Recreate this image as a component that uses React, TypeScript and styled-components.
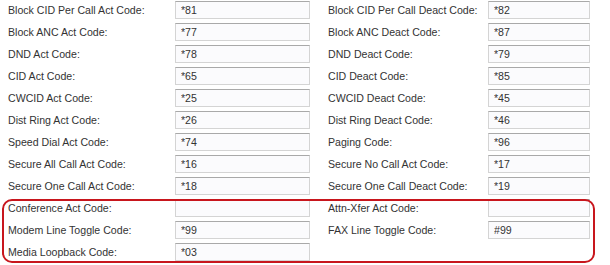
import React from "react";
import styled, { createGlobalStyle } from "styled-components";

const GlobalStyle = createGlobalStyle`
  html, body {
    margin: 0;
    padding: 0;
    background: #fff;
  }
  body {
    font-family: "Liberation Sans", Arial, sans-serif;
    font-size: 10.6px;
    color: #333;
  }
`;

type Field = { label: string; value: string };
type Row = [Field, Field | null];

const rows: Row[] = [
  [{ label: "Block CID Per Call Act Code:", value: "*81" }, { label: "Block CID Per Call Deact Code:", value: "*82" }],
  [{ label: "Block ANC Act Code:", value: "*77" }, { label: "Block ANC Deact Code:", value: "*87" }],
  [{ label: "DND Act Code:", value: "*78" }, { label: "DND Deact Code:", value: "*79" }],
  [{ label: "CID Act Code:", value: "*65" }, { label: "CID Deact Code:", value: "*85" }],
  [{ label: "CWCID Act Code:", value: "*25" }, { label: "CWCID Deact Code:", value: "*45" }],
  [{ label: "Dist Ring Act Code:", value: "*26" }, { label: "Dist Ring Deact Code:", value: "*46" }],
  [{ label: "Speed Dial Act Code:", value: "*74" }, { label: "Paging Code:", value: "*96" }],
  [{ label: "Secure All Call Act Code:", value: "*16" }, { label: "Secure No Call Act Code:", value: "*17" }],
  [{ label: "Secure One Call Act Code:", value: "*18" }, { label: "Secure One Call Deact Code:", value: "*19" }],
  [{ label: "Conference Act Code:", value: "" }, { label: "Attn-Xfer Act Code:", value: "" }],
  [{ label: "Modem Line Toggle Code:", value: "*99" }, { label: "FAX Line Toggle Code:", value: "#99" }],
  [{ label: "Media Loopback Code:", value: "*03" }, null],
];

const Page = styled.div`
  position: relative;
  width: 610px;
  height: 265px;
  overflow: hidden;
`;

const Form = styled.div`
  display: grid;
  grid-template-columns: 167px 135px 178px 102px;
  grid-auto-rows: 22px;
  padding: 0 0 0 8px;
  margin-top: -1px;
`;

const Label = styled.div<{ $right?: boolean }>`
  display: flex;
  align-items: center;
  padding-left: ${({ $right }) => ($right ? "18px" : "0")};
  white-space: nowrap;
`;

const Cell = styled.div`
  display: flex;
  align-items: center;
`;

const Input = styled.input`
  box-sizing: border-box;
  width: 100%;
  height: 18px;
  margin: 0;
  padding: 0 5px;
  font: inherit;
  color: #333;
  background: #fbfbfd;
  border: 1px solid #d4d4d4;
  border-top-color: #a9a9a9;
  border-radius: 0;
  outline: none;
`;

const Highlight = styled.div`
  position: absolute;
  left: 2px;
  top: 199px;
  width: 593px;
  height: 64px;
  box-sizing: border-box;
  border: 2px solid #c8161d;
  border-radius: 10px;
  pointer-events: none;
`;

export default function App() {
  return (
    <Page>
      <GlobalStyle />
      <Form>
        {rows.map(([left, right], i) => (
          <React.Fragment key={i}>
            <Label>{left.label}</Label>
            <Cell>
              <Input defaultValue={left.value} />
            </Cell>
            <Label $right>{right ? right.label : ""}</Label>
            <Cell>{right && <Input defaultValue={right.value} />}</Cell>
          </React.Fragment>
        ))}
      </Form>
      <Highlight />
    </Page>
  );
}
